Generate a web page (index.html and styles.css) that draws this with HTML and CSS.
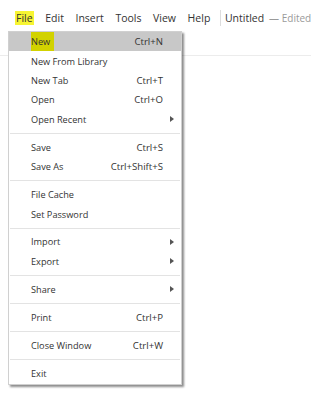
FILE: index.html
```html
<!DOCTYPE html>
<html lang="en">
<head>
    <meta charset="UTF-8">
    <title>Untitled - Menu</title>
    <link rel="stylesheet" href="styles.css">
</head>
<body>
    <div class="menubar">
        <span class="menubar-item active"><span class="mark">File</span></span>
        <span class="menubar-item">Edit</span>
        <span class="menubar-item">Insert</span>
        <span class="menubar-item">Tools</span>
        <span class="menubar-item">View</span>
        <span class="menubar-item">Help</span>
        <span class="doc-title">Untitled</span>
        <span class="doc-status">— Edited</span>
    </div>
    <div class="toolbar"></div>

    <div class="menu">
        <div class="menu-item selected"><span class="label"><span class="mark-dim">New</span></span><span class="shortcut">Ctrl+N</span></div>
        <div class="menu-item"><span class="label">New From Library</span></div>
        <div class="menu-item"><span class="label">New Tab</span><span class="shortcut">Ctrl+T</span></div>
        <div class="menu-item"><span class="label">Open</span><span class="shortcut">Ctrl+O</span></div>
        <div class="menu-item"><span class="label">Open Recent</span><span class="arrow"></span></div>
        <div class="separator"></div>
        <div class="menu-item"><span class="label">Save</span><span class="shortcut">Ctrl+S</span></div>
        <div class="menu-item"><span class="label">Save As</span><span class="shortcut">Ctrl+Shift+S</span></div>
        <div class="separator"></div>
        <div class="menu-item"><span class="label">File Cache</span></div>
        <div class="menu-item"><span class="label">Set Password</span></div>
        <div class="separator"></div>
        <div class="menu-item"><span class="label">Import</span><span class="arrow"></span></div>
        <div class="menu-item"><span class="label">Export</span><span class="arrow"></span></div>
        <div class="separator"></div>
        <div class="menu-item"><span class="label">Share</span><span class="arrow"></span></div>
        <div class="separator"></div>
        <div class="menu-item"><span class="label">Print</span><span class="shortcut">Ctrl+P</span></div>
        <div class="separator"></div>
        <div class="menu-item"><span class="label">Close Window</span><span class="shortcut">Ctrl+W</span></div>
        <div class="separator"></div>
        <div class="menu-item"><span class="label">Exit</span></div>
    </div>
</body>
</html>
```

FILE: styles.css
```css
body {
    margin: 0;
    font-family: 'Open Sans', 'Noto Sans', sans-serif;
    color: #333;
    background: #fff;
}

.menubar {
    display: flex;
    align-items: center;
    height: 26px;
    padding: 5px 0 0 13px;
    font-size: 10.5px;
    line-height: 16px;
    white-space: nowrap;
}

.menubar-item {
    padding: 0 2px;
    margin-right: 7.6px;
}

.mark {
    background: #f7f532;
    padding: 0 1px;
}

.doc-title {
    border-left: 1px solid #ddd;
    padding-left: 4px;
    margin-left: 0;
}

.doc-status {
    margin-left: 5px;
    color: #9a9a9a;
    font-size: 10px;
}

.toolbar {
    height: 24px;
    border-bottom: 1px solid #ececec;
}

.menu {
    position: absolute;
    left: 8px;
    top: 31px;
    width: 172px;
    padding: 0 0 1px;
    background: #fff;
    border: 1px solid #d0d0d0;
    box-shadow: 2px 2px 2px rgba(0, 0, 0, 0.45);
    font-size: 9.2px;
}

.menu-item {
    display: flex;
    align-items: center;
    height: 19.4px;
    padding: 0 18px 0 22px;
}

.menu-item.selected {
    background: #c8c8c8;
}

.mark-dim {
    background: #d2d200;
    padding: 3px 4px 3px 0;
}

.label {
    flex: 1;
}

.shortcut {
    color: #333;
    font-size: 9.6px;
}

.arrow {
    width: 0;
    height: 0;
    margin-right: -11px;
    border-left: 4px solid #555;
    border-top: 3px solid transparent;
    border-bottom: 3px solid transparent;
}

.separator {
    height: 1px;
    margin: 3.8px 1px;
    background: #e3e3e3;
}
```
